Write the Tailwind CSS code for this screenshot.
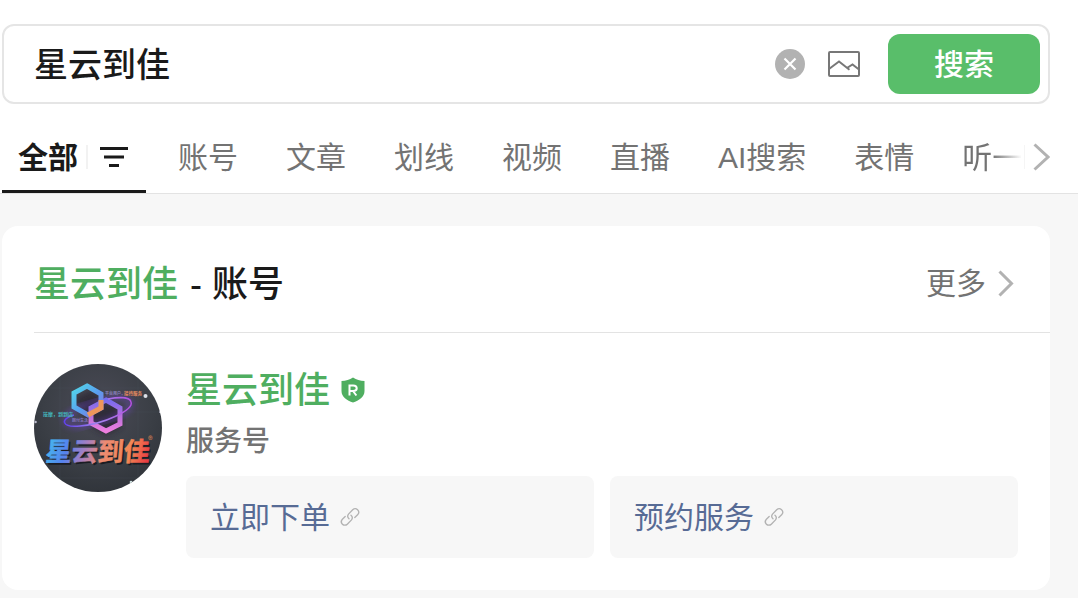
<!DOCTYPE html>
<html lang="zh-CN">
<head>
<meta charset="utf-8">
<meta name="viewport" content="width=device-width, initial-scale=1">
<title>星云到佳 - 搜索</title>
<script src="https://cdn.jsdelivr.net/npm/@tailwindcss/browser@4"></script>
</head>
<body class="min-h-screen overflow-x-hidden bg-[#f7f7f7] font-['Liberation_Sans','Noto_Sans_CJK_SC',sans-serif] text-[#1a1a1a]">
<header class="border-b border-[#e3e3e3] bg-white pt-6">
  <form class="mr-7 ml-0.5 flex h-20 items-center rounded-xl border-2 border-[#e5e5e5] pr-2 pl-[30px]" onsubmit="return false">
    <input type="text" aria-label="搜索内容" value="星云到佳" class="h-14 min-w-0 flex-1 bg-transparent pb-1 text-[34px] font-medium outline-none">
    <button type="button" aria-label="清除" class="mr-[23px]">
      <svg class="size-[30px]" viewBox="0 0 30 30" fill="none"><circle cx="15" cy="15" r="15" fill="#b2b2b2"/><path d="M9.500 9.500l11 11M20.500 9.500l-11 11" stroke="#fff" stroke-width="2.200"/></svg>
    </button>
    <button type="button" aria-label="图片搜索" class="mr-7">
      <svg class="h-[26px] w-8" viewBox="0 0 32 26" fill="none" stroke="#777" stroke-width="2"><rect x="1" y="1" width="30" height="24" rx="1"/><path d="M1 18L11 10.500l9.500 7.500 1 .700M19 17l5.500-3.500 6.500 5"/></svg>
    </button>
    <button type="submit" class="h-15 w-38 rounded-xl bg-[#59be6a] text-[30px] leading-[62px] font-medium text-white">搜索</button>
  </form>
  <nav class="mr-7 ml-0.5 flex h-[89px] items-end text-[30px] whitespace-nowrap text-[#737373]" aria-label="分类">
    <div class="mr-8 flex h-[72px] w-36 shrink-0 items-center border-b-3 border-[#1a1a1a] px-4 pt-0.5">
      <a href="#" class="pt-0.5 font-bold text-[#1a1a1a]">全部</a>
      <span class="mr-3 ml-2 h-6 w-0.5 bg-[#f2f2f2]"></span>
      <button type="button" aria-label="筛选">
        <svg class="block h-5 w-7" viewBox="0 0 28 20" stroke="#1a1a1a" stroke-width="3"><path d="M0 1.500h28M4 10h20M9 18.500h10"/></svg>
      </button>
    </div>
    <div class="flex h-[72px] min-w-0 flex-1 items-center gap-12 border-b-3 border-transparent pt-[3px]">
      <a href="#">账号</a><a href="#">文章</a><a href="#">划线</a><a href="#">视频</a><a href="#">直播</a><a href="#">AI搜索</a><a href="#">表情</a>
      <a href="#" class="bg-linear-to-r from-[#737373] from-50% to-transparent bg-clip-text text-transparent">听一</a>
    </div>
    <button type="button" aria-label="更多分类" class="flex h-[72px] shrink-0 items-center border-b-3 border-transparent pt-0.5">
      <span class="mr-2 h-6 w-px bg-[#f5f5f5]"></span>
      <svg class="h-7 w-[17px]" viewBox="0 0 17 28" fill="none" stroke="#b2b2b2" stroke-width="3"><path d="M1.500 1.500L15 14 1.500 26.500"/></svg>
    </button>
  </nav>
</header>
<main class="pt-8 pr-7 pb-2 pl-0.5">
  <section class="rounded-2xl bg-white pb-8 pl-8">
    <div class="flex h-[107px] items-center justify-between border-b border-[#e3e3e3] pt-2 pr-9">
      <h2 class="pt-1 text-4xl font-medium"><span class="pr-0.5 text-[#4fae60]">星云到佳</span> - 账号</h2>
      <a href="#" class="flex items-center gap-3 text-[30px] text-[#737373]">更多
        <svg class="h-[27px] w-4" viewBox="0 0 16 27" fill="none" stroke="#b2b2b2" stroke-width="3"><path d="M1.500 1.500L13.500 13.500 1.500 25.500"/></svg>
      </a>
    </div>
    <div class="flex gap-6 pt-[31px] pr-8">
      <svg class="size-32 shrink-0" viewBox="0 0 128 128" role="img" aria-label="星云到佳">
        <defs>
          <clipPath id="disc"><circle cx="64" cy="64" r="64"/></clipPath>
          <radialGradient id="back" cx=".5" cy=".35" r=".7"><stop stop-color="#4b4b57"/><stop offset=".6" stop-color="#3b3f46"/><stop offset="1" stop-color="#2f3339"/></radialGradient>
          <linearGradient id="blue" x2="1" y2="1"><stop stop-color="#52d7e8"/><stop offset=".55" stop-color="#5a9df0"/><stop offset="1" stop-color="#8a75dc"/></linearGradient>
          <linearGradient id="pink" x2="0" y2="1"><stop stop-color="#776cf0"/><stop offset=".5" stop-color="#b66fdb"/><stop offset="1" stop-color="#ed7fe0"/></linearGradient>
          <linearGradient id="ring"><stop stop-color="#6142ed"/><stop offset=".5" stop-color="#a285ef"/><stop offset="1" stop-color="#b450e0"/></linearGradient>
          <linearGradient id="word" gradientUnits="userSpaceOnUse" x1="0" y1="-20" x2="100" y2="4"><stop stop-color="#45b9ed"/><stop offset=".2" stop-color="#5583ef"/><stop offset=".38" stop-color="#a77fc0"/><stop offset=".55" stop-color="#ed8b72"/><stop offset=".82" stop-color="#f28654"/><stop offset="1" stop-color="#e93c42"/></linearGradient>
          <filter id="soft"><feGaussianBlur stdDeviation="3"/></filter>
        </defs>
        <g clip-path="url(#disc)">
          <path fill="url(#back)" d="M0 0h128v128H0z"/>
          <path d="M0 24h128M0 48h128M0 114h128M26 0v128M104 0v128" stroke="#555b63" stroke-opacity=".3" stroke-width=".6"/>
          <path d="M40 35l18-9 14 12 15 5v20l-15 8-14-8z" fill="#25242e" opacity=".7" filter="url(#soft)"/>
          <ellipse cx="64" cy="48" rx="34" ry="11" transform="rotate(-16 64 48)" fill="none" stroke="#7944e8" stroke-width="4" opacity=".5" filter="url(#soft)"/>
          <path d="M72 36L86 44v16L72 67 57 59V44z" fill="none" stroke="url(#pink)" stroke-width="5"/>
          <path d="M53 22L67 30v14L54 51 40 43V29z" fill="none" stroke="url(#blue)" stroke-width="5"/>
          <path d="M67 36v8L54 51" fill="none" stroke="#ed965b" stroke-width="5"/>
          <path d="M40 51C25 55 28 64 46 62c24-2 54-16 51-24-1-5-12-5-23-3" fill="none" stroke="url(#ring)" stroke-width="1.500"/>
          <g font-family="Noto Sans CJK SC, sans-serif" font-weight="700">
            <text x="71" y="31" font-size="4" fill="#8980bb">平台用户，</text>
            <text x="90" y="31" font-size="4.500" fill="#e58a60">接待服务</text>
            <text x="9" y="52" font-size="5" fill="#43b6bc">按摩，到到店</text>
            <text x="38" y="58" font-size="4" fill="#8475c0">跑付生活</text>
            <g font-size="26" transform="translate(12 97) skewX(-5)">
              <text x="1" y="2" fill="#1b1d24">星云到佳</text>
              <text x="-1" y="0" fill="url(#word)" stroke="url(#word)" stroke-width=".6">星云到佳</text>
            </g>
            <text x="114" y="80" font-size="9" fill="#c87951">®</text>
          </g>
          <circle cx="111.500" cy="32" r="2" fill="#dce0e8"/><circle cx="1.500" cy="58" r="1.300" fill="#bbc"/><circle cx="97" cy="118" r="1.300" fill="#cdd"/><circle cx="126" cy="48" r="1" fill="#bbc"/>
        </g>
      </svg>
      <div class="min-w-0 flex-1">
        <h3 class="flex h-[52px] items-center gap-[11px] text-4xl font-medium text-[#4fae60]"><a href="#" class="pt-0.5">星云到佳</a>
          <svg class="h-[26px] w-6" viewBox="0 0 24 26" role="img" aria-label="已认证"><path d="M12 .500c3.500 2.600 7 3.200 11.500 3.500v10c0 6-5.500 9.500-11.500 11.500C6 23.500.500 20 .500 14V4C5 3.700 8.500 3.100 12 .500z" fill="#4fae60"/><path d="M8.500 18.500V8.500h3.700c4.700 0 4.700 5.600 0 5.600H8.500M12 14l3.400 4.500" fill="none" stroke="#fff" stroke-width="2"/></svg>
        </h3>
        <p class="h-[60px] pt-0.5 text-[28px] leading-[48px] font-medium text-[#737373]">服务号</p>
        <div class="grid grid-cols-2 gap-4 text-[30px] text-[#576b95]">
          <a href="#" class="flex h-[82px] items-center gap-2.5 rounded-lg bg-[#f7f7f7] px-6">立即下单
            <svg class="size-5" viewBox="0 0 20 20" fill="none" stroke="#b2b2b2" stroke-width="1.300" stroke-linecap="round"><path d="M9 11.800a3.500 3.500 0 0 1-.500-4.700l4.200-4.300a3.400 3.400 0 0 1 4.900 4.900L14.800 10.500M11 8.200a3.500 3.500 0 0 1 .500 4.700l-4.200 4.300a3.400 3.400 0 0 1-4.900-4.900L5.200 9.500"/></svg>
          </a>
          <a href="#" class="flex h-[82px] items-center gap-2.5 rounded-lg bg-[#f7f7f7] px-6">预约服务
            <svg class="size-5" viewBox="0 0 20 20" fill="none" stroke="#b2b2b2" stroke-width="1.300" stroke-linecap="round"><path d="M9 11.800a3.500 3.500 0 0 1-.500-4.700l4.200-4.300a3.400 3.400 0 0 1 4.900 4.900L14.800 10.500M11 8.200a3.500 3.500 0 0 1 .500 4.700l-4.200 4.300a3.400 3.400 0 0 1-4.900-4.900L5.200 9.500"/></svg>
          </a>
        </div>
      </div>
    </div>
  </section>
</main>
</body>
</html>
